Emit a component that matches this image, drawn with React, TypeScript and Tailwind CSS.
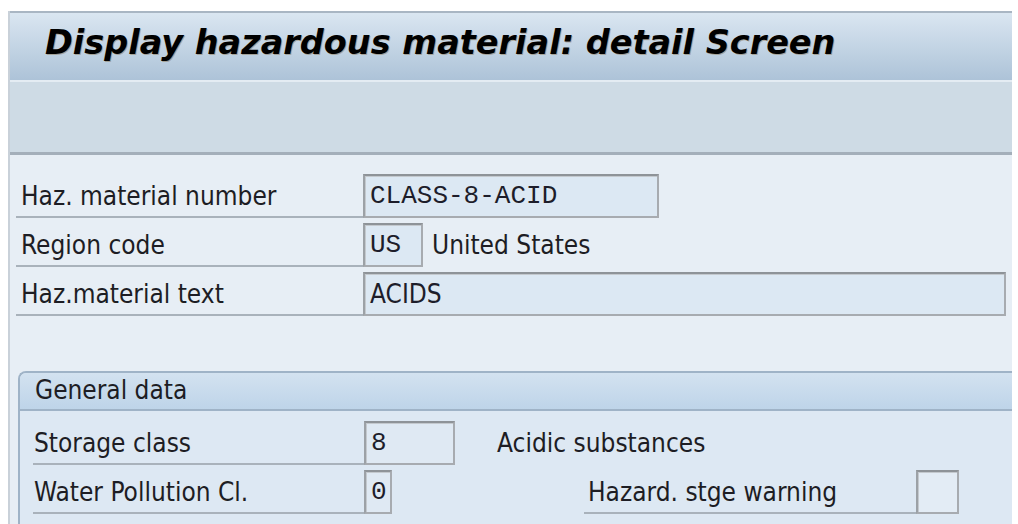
import React from "react";

const labelFont = {
  fontFamily: '"DejaVu Sans", Tahoma, sans-serif',
  fontStretch: "condensed" as const,
};

function Label({ text, w, pl = "pl-[5px]" }: { text: string; w: string; pl?: string }) {
  return (
    <div className={`${w} h-full flex items-center border-b-2 border-[#a9b2bb] ${pl} text-[26px] text-[#1d1d24]`} style={labelFont}>
      <span className="mt-[3px]">{text}</span>
    </div>
  );
}

function Box({ w, children, mono = true, bg = "bg-[#dce8f3]" }: { w: string; children?: React.ReactNode; mono?: boolean; bg?: string }) {
  return (
    <div
      className={`${w} h-full ${bg} border-2 border-[#a7abb0] border-t-[#8e9398] border-l-[#9ca1a6] shadow-[inset_1px_1px_0_#c4c9ce] flex items-center pl-[5px] text-[#1d1d2a] overflow-hidden ${mono ? "font-['Liberation_Mono',monospace] text-[26px]" : "text-[26px]"}`}
      style={mono ? undefined : labelFont}
    >
      <span className="mt-[1px]">{children}</span>
    </div>
  );
}

export default function App() {
  return (
    <div className="w-[1018px] h-[524px] bg-white pt-[11px] pl-[8px] overflow-hidden">
      <div className="w-[1004px] h-[513px] flex flex-col border-l-2 border-[#c9d1d9] overflow-hidden">
        {/* Title bar */}
        <div className="h-[69px] shrink-0 border-t-2 border-[#a9b6c3] bg-gradient-to-b from-[#dae6f1] to-[#adc3d8] flex items-center pl-[35px]">
          <h1
            className="text-[33.5px] font-bold italic text-black leading-none mt-[-8px] [text-shadow:1px_1px_0_rgba(120,80,20,0.35)]"
            style={{ fontFamily: '"DejaVu Sans", Verdana, sans-serif' }}
          >
            Display hazardous material: detail Screen
          </h1>
        </div>
        {/* Toolbar */}
        <div className="h-[75px] shrink-0 bg-[#cedbe5] border-t-2 border-[#e4ecf3] border-b-[3px] border-b-[#a4afba]" />
        {/* Body */}
        <div className="flex-1 bg-[#e7eef5] pt-[19px] pl-[6px] flex flex-col">
          <div className="flex flex-col gap-[5px]">
            <div className="h-[44px] flex">
              <Label text="Haz. material number" w="w-[347px]" />
              <Box w="w-[296px]">CLASS-8-ACID</Box>
            </div>
            <div className="h-[44px] flex items-center">
              <Label text="Region code" w="w-[347px]" />
              <Box w="w-[60px]">US</Box>
              <span className="ml-[9px] text-[26px] text-[#1d1d24] mt-[1px]" style={labelFont}>United States</span>
            </div>
            <div className="h-[44px] flex">
              <Label text="Haz.material text" w="w-[347px]" />
              <Box w="w-[643px]" mono={false}>ACIDS</Box>
            </div>
          </div>

          {/* Group box */}
          <div className="mt-[55px] ml-[2px] flex-1 flex flex-col border-l-2 border-t-2 border-[#9fb3c7] rounded-tl-[8px] bg-[#dde8f3] overflow-hidden">
            <div className="h-[38px] shrink-0 bg-gradient-to-b from-[#d3e2f0] to-[#bed4e9] border-b-2 border-[#9fb3c7] flex items-center pl-[15px] text-[26px] text-[#1d1d24]" style={labelFont}>
              <span className="mt-[-2px]">General data</span>
            </div>
            <div className="pt-[10px] pl-[13px] flex flex-col gap-[5px]">
              <div className="h-[44px] flex items-center">
                <Label text="Storage class" w="w-[331px]" pl="pl-[1px]" />
                <Box w="w-[91px]" bg="bg-[#dfe9f3]">8</Box>
                <span className="ml-[42px] text-[26px] text-[#1d1d24] mt-[1px]" style={labelFont}>Acidic substances</span>
              </div>
              <div className="h-[44px] flex items-center">
                <Label text="Water Pollution Cl." w="w-[331px]" pl="pl-[1px]" />
                <Box w="w-[28px]" bg="bg-[#dfe9f3]">0</Box>
                <div className="w-[192px]" />
                <Label text="Hazard. stge warning" w="w-[332px]" pl="pl-[4px]" />
                <Box w="w-[43px]" bg="bg-[#e3ecf5]" />
              </div>
            </div>
          </div>
        </div>
      </div>
    </div>
  );
}
